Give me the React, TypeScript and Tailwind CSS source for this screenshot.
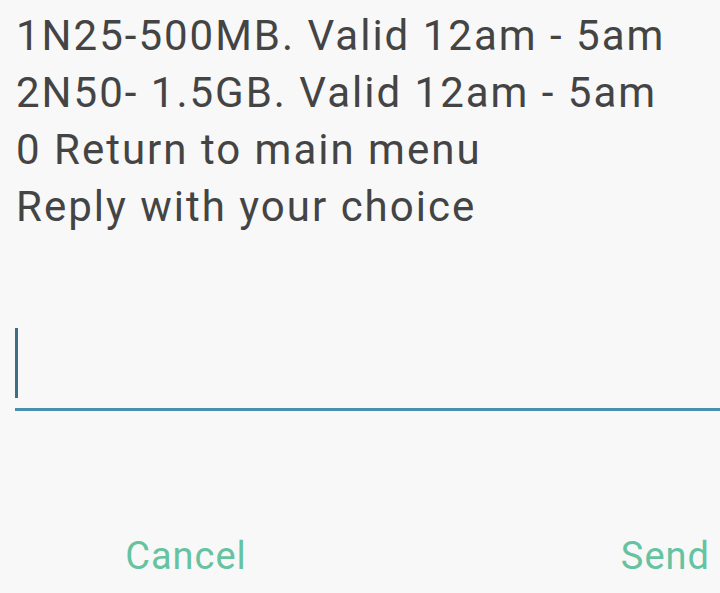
import React from "react";

export default function App() {
  return (
    <div className="w-[720px] h-[593px] bg-[#f8f8f8] overflow-hidden flex flex-col" style={{ fontFamily: "Roboto, 'Liberation Sans', sans-serif" }}>
      <div className="pl-[16px] pt-[7px] text-[#444444] text-[42px] leading-[57px] tracking-[2px] font-normal">
        <div>1N25-500MB. Valid 12am - 5am</div>
        <div>2N50- 1.5GB. Valid 12am - 5am</div>
        <div>0 Return to main menu</div>
        <div>Reply with your choice</div>
      </div>
      <div className="ml-[15px] mt-[92px] h-[84px] border-b-[3px] border-[#4b8fae] flex items-end pb-[10px]">
        <div className="w-[3px] h-[70px] bg-[#3f6f86]" />
      </div>
      <div className="flex-1 flex items-end pb-[8px]">
        <div className="flex w-full text-[#66c3a2] text-[38px] tracking-[1px]">
          <div className="w-[372px] text-center">Cancel</div>
          <div className="flex-1 text-right pr-[10px]">Send</div>
        </div>
      </div>
    </div>
  );
}
